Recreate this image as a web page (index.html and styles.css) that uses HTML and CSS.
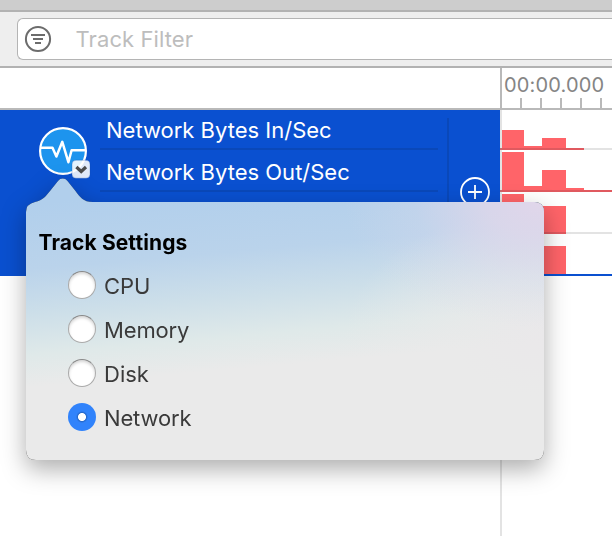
FILE: index.html
```html
<!DOCTYPE html>
<html lang="en">
<head>
<meta charset="utf-8">
<title>Track Settings</title>
<link rel="stylesheet" href="styles.css">
</head>
<body>
<div class="window">
  <div class="titlebar"></div>
  <header class="toolbar">
    <div class="search">
      <svg class="filter-icon" viewBox="0 0 28 28" fill="none" stroke="#6c6c6c" stroke-width="2">
        <circle cx="14" cy="14" r="12.1"/>
        <path d="M7 10H21M9 14H19M11 18H17"/>
      </svg>
      <span class="placeholder">Track Filter</span>
    </div>
  </header>
  <main class="workspace">
    <section class="tracks">
      <div class="tracks-head"></div>
      <div class="track">
        <div class="track-icon">
          <svg width="54" height="56" viewBox="0 0 54 56">
            <circle cx="25" cy="26" r="22.9" fill="#1d94ee" stroke="#fff" stroke-width="2.2"/>
            <path d="M2 22.8H14.5L18.4 31.5L24.3 16.8L30.4 37.2L33.6 25.2H48" fill="none" stroke="#fff" stroke-width="2.5" stroke-linejoin="round"/>
            <rect x="34" y="35.2" width="18" height="18" rx="4" fill="#fff" fill-opacity=".88" stroke="#174ba7" stroke-opacity=".35" stroke-width=".8"/>
            <path d="M38.4 42L43.2 46.5L48 42" fill="none" stroke="#4d4d4d" stroke-width="3.2"/>
          </svg>
        </div>
        <div class="lanes">
          <div class="lane"><span class="label-in">Network Bytes In/Sec</span></div>
          <div class="lane"><span class="label-out">Network Bytes Out/Sec</span></div>
        </div>
        <div class="track-add">
          <svg width="30" height="30" viewBox="0 0 30 30" fill="none" stroke="#fff" stroke-width="1.8">
            <circle cx="15" cy="15" r="14"/>
            <path d="M8 15H22M15 8V22"/>
          </svg>
        </div>
      </div>
    </section>
    <section class="timeline">
      <div class="ruler">
        <span class="time">00:00.000</span>
        <div class="ticks"><i></i><i></i><i></i><i></i><i></i></div>
      </div>
      <svg class="chart" width="112" height="426" viewBox="0 0 112 426" shape-rendering="crispEdges">
        <path d="M0 0H2V426H0Z" fill="#e3e3e3"/>
        <path d="M2 38H112V40H2ZM2 122H112V124H2Z" fill="#e3e3e3"/>
        <g fill="#ff6469">
          <path d="M2 20H24V36H42V28H66V40H2Z"/>
          <path d="M2 42H24V76H42V60H66V78H84V80H2Z"/>
          <path d="M2 84H24V124H2ZM42 96H66V124H42Z"/>
          <path d="M42 136H66V164H42Z"/>
        </g>
        <path d="M2 38H84V40H2ZM2 80H112V82H2ZM42 122H66V124H42Z" fill="#e0595f"/>
        <path d="M0 38H2V40H0ZM0 80H2V82H0Z" fill="#c96a6e"/>
        <path d="M0 164H112V166H0Z" fill="#0a50d0"/>
      </svg>
    </section>
  </main>
  <aside class="popover">
    <div class="popover-body">
      <h1>Track Settings</h1>
      <ul class="options">
        <li><span class="radio"></span><span class="opt-cpu">CPU</span></li>
        <li><span class="radio"></span><span class="opt-memory">Memory</span></li>
        <li><span class="radio"></span><span class="opt-disk">Disk</span></li>
        <li><span class="radio checked"></span><span class="opt-network">Network</span></li>
      </ul>
    </div>
  </aside>
</div>
</body>
</html>
```
FILE: styles.css
```css
* { box-sizing: border-box; }
body {
  margin: 0;
  font-family: Inter, "Liberation Sans", sans-serif;
  font-size: 22px;
  background: #fff;
}
.window {
  position: relative;
  width: 612px;
  height: 536px;
  overflow: hidden;
}
.titlebar {
  height: 12px;
  background: #cdcdcd;
  border-bottom: 2px solid #b2b2b2;
}
.toolbar {
  height: 56px;
  padding: 6px 0 0 17px;
  background: #eee;
  border-bottom: 2px solid #b2b2b2;
}
.search {
  display: flex;
  align-items: center;
  height: 42px;
  padding-left: 6px;
  background: #fff;
  border: 1px solid #b4b4b4;
  border-right: 0;
  border-radius: 6px 0 0 6px;
}
.filter-icon { width: 28px; height: 28px; }
.placeholder {
  margin-left: 23.5px;
  color: #bdbdbd;
  letter-spacing: 0.1px;
}
.workspace { display: flex; height: 468px; }
.tracks { width: 500px; }
.tracks-head { height: 42px; border-bottom: 2px solid #b9b9b9; }
.track {
  display: flex;
  height: 166px;
  background: #0a50d0;
  color: #fff;
}
.track-icon { width: 100px; padding: 15px 0 0 38px; }
.lanes { width: 347px; padding-right: 9px; }
.lane {
  height: 42px;
  line-height: 44px;
  padding-left: 6px;
  white-space: nowrap;
  border-bottom: 2px solid #0a48b9;
}
.lane:first-child { height: 40px; line-height: 40px; }
.track-add {
  width: 53px;
  margin-top: 8px;
  padding: 59px 0 0 11px;
  border-left: 2px solid #0a48b9;
}
.timeline { width: 112px; }
.ruler {
  display: flex;
  flex-direction: column;
  justify-content: space-between;
  height: 42px;
  border-left: 2px solid #b9b9b9;
  border-bottom: 2px solid #b9b9b9;
}
.time {
  padding-left: 2px;
  font-size: 20px;
  letter-spacing: 0.15px;
  line-height: 24px;
  margin-top: 5px;
  color: #858585;
}
.ticks { display: flex; gap: 18px; padding-left: 18px; }
.ticks i { width: 2px; height: 10px; background: #b9b9b9; }
.chart { display: block; }
.popover {
  position: absolute;
  left: 26px;
  top: 178px;
  filter: drop-shadow(0 0 0.7px rgba(0,0,0,.8)) drop-shadow(0 9px 12px rgba(0,0,0,.32));
}
.popover-body {
  width: 518px;
  height: 282px;
  padding: 52px 0 0 12.5px;
  clip-path: path("M9 24C17 22 20 18 24 13L32 3C34.5 -0.3 39 -0.3 41.5 3L49.5 13C54 19 57 24 67 24H508Q518 24 518 34V272Q518 282 508 282H10Q0 282 0 272V34Q0 26 9 24Z");
  background:
    radial-gradient(ellipse 200px 130px at 518px 20px, rgba(226,214,234,1), rgba(224,215,234,.8) 30%, rgba(216,216,236,.3) 65%, rgba(216,220,236,0) 100%),
    radial-gradient(ellipse 200px 130px at 518px 160px, rgba(234,232,234,.95), rgba(234,234,234,.6) 45%, rgba(234,234,234,0) 100%),
    linear-gradient(175deg, #b1cfec 8%, #bad3eb 28%, #cddfe9 42%, #dfe9e9 54%, #eaeaea 64%);
}
h1 {
  margin: 0;
  font-size: 21px;
  letter-spacing: 0.1px;
  line-height: 26px;
  font-weight: 700;
  color: #000;
}
.options { margin: 0; padding: 8px 0 0 29.5px; list-style: none; }
.options li {
  display: flex;
  align-items: center;
  gap: 8px;
  height: 44px;
  color: #3a3a3a;
}
.radio {
  width: 28px;
  height: 28px;
  margin-bottom: 2px;
  border-radius: 50%;
  border: 1px solid #aaa;
  border-top-color: #888;
  background: #fff;
  box-shadow: inset 0 2px 3px rgba(0,0,0,.16);
}
.radio.checked {
  border: 0;
  background: radial-gradient(circle at 50% 50%, #fff 3.6px, #2668c9 4.4px, #3183fb 6px);
  box-shadow: none;
}
.opt-memory, .opt-network { letter-spacing: -0.15px; }
```
